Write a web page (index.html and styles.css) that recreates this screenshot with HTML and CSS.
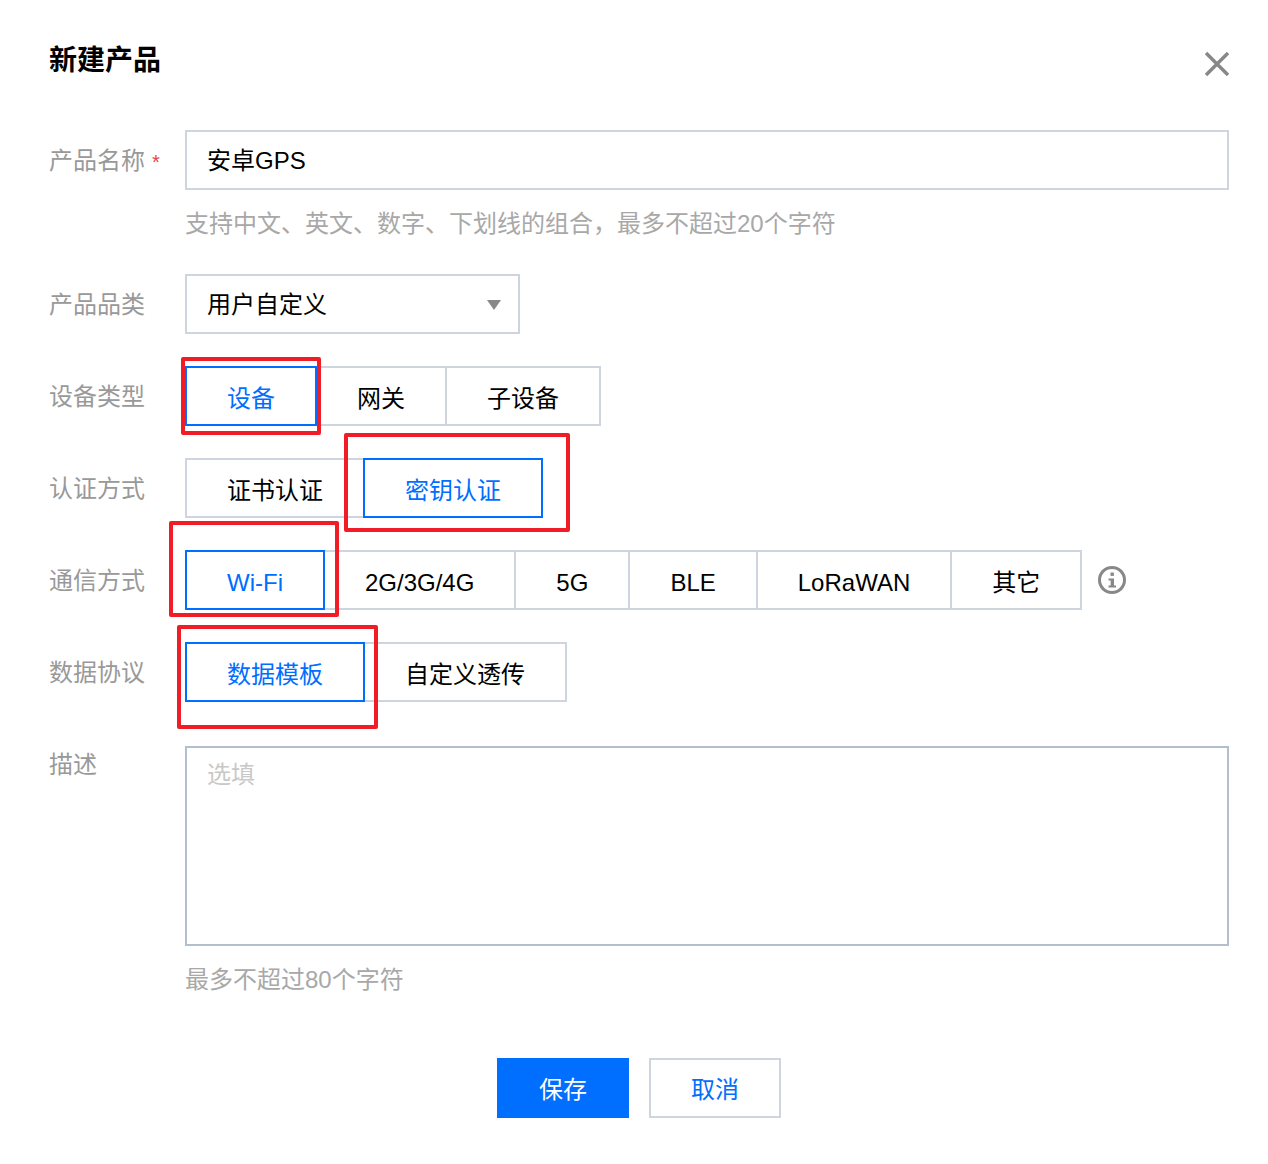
FILE: index.html
```html
<!DOCTYPE html>
<html lang="zh-CN">
<head>
  <meta charset="UTF-8" />
  <meta name="viewport" content="width=device-width, initial-scale=1.0" />
  <title>新建产品</title>
  <link rel="stylesheet" href="styles.css">
</head>
<body>
  <div class="dialog">
    <div class="dialog-head">
      <h2 class="dialog-title">新建产品</h2>
      <svg class="close" width="26" height="26" viewBox="0 0 26 26" aria-hidden="true">
        <path d="M2 2 L24 24 M24 2 L2 24" stroke="#888" stroke-width="3.4" fill="none" />
      </svg>
    </div>

    <div class="row">
      <div class="label">产品名称<span class="required">*</span></div>
      <div class="field">
        <div class="input">安卓GPS</div>
        <div class="hint">支持中文、英文、数字、下划线的组合，最多不超过20个字符</div>
      </div>
    </div>

    <div class="row">
      <div class="label">产品品类</div>
      <div class="field">
        <div class="input select">用户自定义<span class="caret"></span></div>
      </div>
    </div>

    <div class="row">
      <div class="label">设备类型</div>
      <div class="seg">
        <div class="seg-item active">设备</div>
        <div class="seg-item">网关</div>
        <div class="seg-item">子设备</div>
        <div class="mark mark-device"></div>
      </div>
    </div>

    <div class="row">
      <div class="label">认证方式</div>
      <div class="seg">
        <div class="seg-item">证书认证</div>
        <div class="seg-item active">密钥认证</div>
        <div class="mark mark-auth"></div>
      </div>
    </div>

    <div class="row">
      <div class="label">通信方式</div>
      <div class="seg">
        <div class="seg-item active">Wi-Fi</div>
        <div class="seg-item">2G/3G/4G</div>
        <div class="seg-item">5G</div>
        <div class="seg-item">BLE</div>
        <div class="seg-item">LoRaWAN</div>
        <div class="seg-item">其它</div>
        <div class="mark mark-net"></div>
      </div>
      <svg class="info" width="28" height="28" viewBox="0 0 28 28" aria-hidden="true">
        <circle cx="14" cy="14" r="12.5" stroke="#888" stroke-width="3" fill="none" />
        <rect x="12.5" y="6.5" width="3.4" height="3.4" fill="#888" />
        <path d="M10.5 12.5 H16 V19.5 H18 V21.5 H10.5 V19.5 H12.6 V14.5 H10.5 Z" fill="#888" />
      </svg>
    </div>

    <div class="row row-desc">
      <div class="label">数据协议</div>
      <div class="seg">
        <div class="seg-item active">数据模板</div>
        <div class="seg-item">自定义透传</div>
        <div class="mark mark-data"></div>
      </div>
    </div>

    <div class="row">
      <div class="label label-top">描述</div>
      <div class="field">
        <div class="textarea">选填</div>
        <div class="hint">最多不超过80个字符</div>
      </div>
    </div>

    <div class="actions">
      <div class="btn btn-primary">保存</div>
      <div class="btn">取消</div>
    </div>
  </div>
</body>
</html>
```

FILE: styles.css
```css
* {
  box-sizing: border-box;
}
body {
  margin: 0;
  background: #fff;
  color: #000;
  font-family: "Liberation Sans", "Noto Sans CJK SC", sans-serif;
  font-size: 24px;
}
.dialog {
  width: 1268px;
  height: 1164px;
  padding: 40px 39px 0 49px;
}
.dialog-head {
  display: flex;
  justify-content: space-between;
  align-items: flex-start;
  height: 90px;
}
.dialog-title {
  margin: 0;
  font-size: 28px;
  font-weight: 700;
  line-height: 42px;
}
.close {
  margin: 11px -1px 0 0;
}
.row {
  display: flex;
  align-items: flex-start;
  margin-bottom: 32px;
}
.row-desc {
  margin-bottom: 44px;
}
.label {
  width: 136px;
  flex: none;
  height: 60px;
  line-height: 62px;
  color: #999;
  white-space: nowrap;
}
.label-top {
  height: 36px;
  line-height: 38px;
}
.required {
  color: #e54545;
  margin-left: 7px;
  font-size: 20px;
}
.field {
  flex: 1;
}
.input {
  height: 60px;
  line-height: 58px;
  padding: 0 20px;
  border: 2px solid #cfd5de;
}
.select {
  position: relative;
  width: 335px;
}
.caret {
  position: absolute;
  right: 17px;
  top: 24px;
  border-left: 7.5px solid transparent;
  border-right: 7.5px solid transparent;
  border-top: 10px solid #888;
}
.hint {
  margin-top: 16px;
  line-height: 36px;
  height: 36px;
  color: #a8a8a8;
  white-space: nowrap;
}
.seg {
  position: relative;
  display: flex;
}
.seg-item {
  position: relative;
  height: 60px;
  line-height: 62px;
  padding: 0 40px;
  border: 2px solid #cfd5de;
  margin-left: -2px;
  white-space: nowrap;
}
.seg-item:first-child {
  margin-left: 0;
}
.seg-item.active {
  z-index: 1;
  border-color: #006eff;
  color: #006eff;
}
.info {
  margin: 16px 0 0 16px;
}
.mark {
  position: absolute;
  z-index: 2;
  border: 4px solid #f01c26;
  border-radius: 2px;
}
.mark-device {
  left: -4px;
  top: -9px;
  width: 140px;
  height: 78px;
}
.mark-auth {
  left: 159px;
  top: -25px;
  width: 226px;
  height: 99px;
}
.mark-net {
  left: -16px;
  top: -29px;
  width: 170px;
  height: 96px;
}
.mark-data {
  left: -8px;
  top: -17px;
  width: 201px;
  height: 104px;
}
.textarea {
  height: 200px;
  padding: 8px 20px;
  line-height: 38px;
  border: 2px solid #b4bfcc;
  color: #c8c8c8;
}
.actions {
  display: flex;
  justify-content: center;
  gap: 20px;
  margin-top: 60px;
}
.btn {
  width: 132px;
  height: 60px;
  line-height: 60px;
  text-align: center;
  border: 2px solid #cfd5de;
  color: #006eff;
}
.btn-primary {
  background: #006eff;
  border-color: #006eff;
  color: #fff;
}
```
